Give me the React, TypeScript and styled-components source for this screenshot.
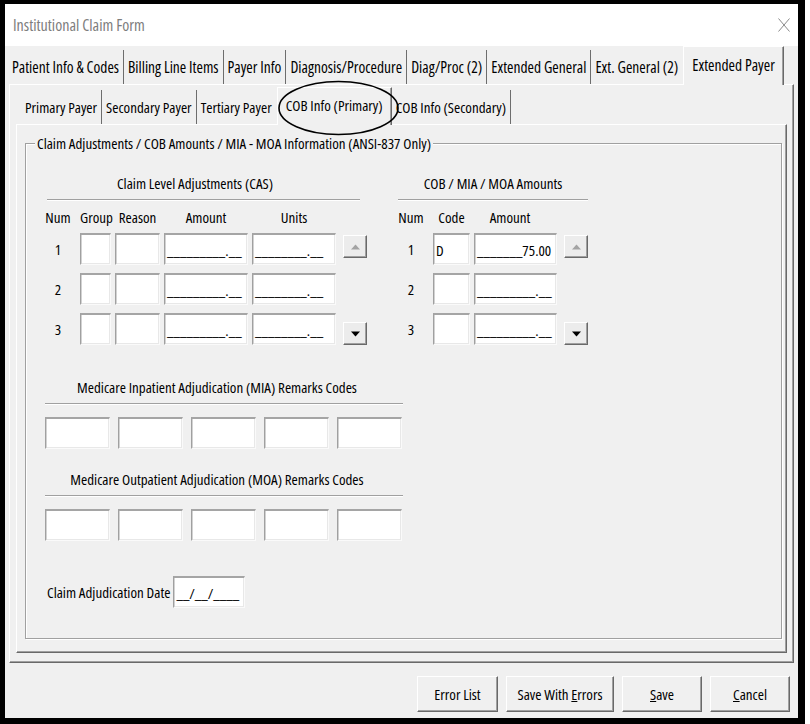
import React from "react";
import styled, { createGlobalStyle, css } from "styled-components";

const GlobalStyle = createGlobalStyle`
  html, body {
    margin: 0;
    padding: 0;
    background: #ffffff;
  }
  body {
    font-family: "Open Sans", "Liberation Sans", sans-serif;
    font-stretch: 75%;
    font-size: 15px;
    color: #000000;
  }
`;

const Frame = styled.div`
  position: relative;
  box-sizing: border-box;
  width: 805px;
  height: 724px;
  overflow: hidden;
  border-style: solid;
  border-color: #000000;
  border-width: 4px 7px 6px 5px;
`;

const Window = styled.div`
  display: flex;
  flex-direction: column;
  height: 100%;
  background: #f0f0f0;
`;

const TitleBar = styled.div`
  flex: none;
  height: 42px;
  display: flex;
  align-items: center;
  justify-content: space-between;
  padding: 0 8px;
  background: #ffffff;
`;

const TitleText = styled.span`
  font-size: 16px;
  color: #7d7d7d;
`;

const TabStrip = styled.div<{ $height: number; $inset: number; $size: number }>`
  position: relative;
  z-index: 1;
  flex: none;
  display: flex;
  align-items: flex-end;
  height: ${(p) => p.$height}px;
  margin-bottom: -1px;
  padding-left: ${(p) => p.$inset}px;
  font-size: ${(p) => p.$size}px;
`;

const Tab = styled.div<{ $active?: boolean; $sep?: boolean; $tall?: number }>`
  box-sizing: border-box;
  display: flex;
  align-items: center;
  height: 34px;
  margin-bottom: 1px;
  padding: 0 4px;
  white-space: nowrap;
  border-right: 1px solid ${(p) => (p.$sep ? "#6d6d6d" : "transparent")};

  ${(p) =>
    p.$active &&
    css`
      height: ${p.$tall}px;
      margin-bottom: 0;
      padding: 0 8px 3px;
      background: #f0f0f0;
      border-left: 1px solid #ffffff;
      border-top: 1px solid #ffffff;
      border-right: 1px solid #696969;
      box-shadow: inset -1px 0 0 #a0a0a0;
    `}
`;

const Page = styled.div<{ $pad: string }>`
  flex: 1;
  display: flex;
  flex-direction: column;
  min-height: 0;
  padding: ${(p) => p.$pad};
  border-style: solid;
  border-width: 1px;
  border-color: #ffffff #696969 #696969 #ffffff;
  box-shadow: inset -1px -1px 0 #a0a0a0;
`;

const OuterPage = styled(Page)`
  margin: 0 4px;
`;

const GroupBox = styled.fieldset`
  flex: 1;
  min-width: 0;
  margin: 0;
  padding: 23px 0 0 14px;
  border: 1px solid #a0a0a0;
  box-shadow: 1px 1px 0 #ffffff, inset 1px 1px 0 #ffffff;
`;

const Legend = styled.legend`
  margin-left: -5px;
  padding: 0 2px;
  line-height: 17px;
  background: #f0f0f0;
`;

const TopRow = styled.div`
  display: flex;
  gap: 26px;
`;

const Section = styled.div`
  display: flex;
  flex-direction: column;
`;

const SectionTitle = styled.div<{ $indent: number; $width: number }>`
  margin-left: ${(p) => p.$indent}px;
  width: ${(p) => p.$width}px;
  line-height: 17px;
  text-align: center;
  white-space: nowrap;
`;

const Rule = styled.div<{ $indent?: number; $width?: number }>`
  margin-top: 7px;
  margin-left: ${(p) => p.$indent ?? 0}px;
  width: ${(p) => (p.$width ? `${p.$width}px` : "auto")};
  border-top: 1px solid #a0a0a0;
  border-bottom: 1px solid #ffffff;
`;

const AdjGrid = styled.div<{ $cols: string }>`
  display: grid;
  grid-template-columns: ${(p) => p.$cols};
  grid-template-rows: 16px repeat(3, 32px);
  column-gap: 4px;
  row-gap: 8px;
  margin-top: 8px;
`;

const HeadCell = styled.div<{ $nudge?: number }>`
  align-self: end;
  padding-right: ${(p) => p.$nudge ?? 0}px;
  line-height: 16px;
  text-align: center;
  white-space: nowrap;
`;

const NumCell = styled.div`
  align-self: center;
  text-align: center;
`;

const Field = styled.div`
  box-sizing: border-box;
  height: 32px;
  display: flex;
  align-items: center;
  padding: 0 2px;
  overflow: hidden;
  white-space: nowrap;
  background: #ffffff;
  border-style: solid;
  border-width: 2px 1px 1px 1px;
  border-color: #a5a5a5 #fafafa #fafafa #a0a0a0;
  box-shadow: inset 1px 0 0 #d2d2d2, inset -1px -1px 0 #e8e8e8;
`;

const SpinButton = styled.div<{ $place: "start" | "end" }>`
  box-sizing: border-box;
  justify-self: end;
  align-self: ${(p) => p.$place};
  width: 24px;
  height: 23px;
  margin-top: ${(p) => (p.$place === "start" ? "2px" : "0")};
  display: flex;
  align-items: center;
  justify-content: center;
  background: #ececec;
  border-style: solid;
  border-width: 1px;
  border-color: #ffffff #696969 #696969 #ffffff;
  box-shadow: inset -1px -1px 0 #a0a0a0;
`;

const Remarks = styled.div<{ $gap: number }>`
  width: 358px;
  margin: ${(p) => p.$gap}px 0 0 5px;
`;

const RemarkTitle = styled.div`
  padding-right: 14px;
  line-height: 17px;
  text-align: center;
  white-space: nowrap;
`;

const RemarkBoxes = styled.div`
  display: grid;
  grid-template-columns: repeat(5, 65px);
  column-gap: 8px;
  margin-top: 12px;
`;

const DateRow = styled.div`
  display: flex;
  align-items: center;
  gap: 3px;
  margin: 35px 0 0 7px;
`;

const DateField = styled(Field)`
  width: 72px;
`;

const ButtonBar = styled.div`
  flex: none;
  box-sizing: border-box;
  height: 55px;
  display: flex;
  justify-content: flex-end;
  align-items: flex-start;
  gap: 8px;
  padding: 13px 8px 0 0;
`;

const Button = styled.button<{ $w: number }>`
  box-sizing: border-box;
  width: ${(p) => p.$w}px;
  height: 36px;
  padding: 0;
  font: inherit;
  font-stretch: 75%;
  white-space: nowrap;
  color: #000000;
  background: #f0f0f0;
  border-style: solid;
  border-width: 1px;
  border-color: #ffffff #696969 #696969 #ffffff;
  box-shadow: inset -1px -1px 0 #a0a0a0;
`;

const Key = styled.span`
  text-decoration: underline;
`;

const Annotation = styled.svg`
  position: absolute;
  left: 273px;
  top: 76px;
  pointer-events: none;
  z-index: 5;
`;

const outerTabs = [
  "Patient Info & Codes",
  "Billing Line Items",
  "Payer Info",
  "Diagnosis/Procedure",
  "Diag/Proc (2)",
  "Extended General",
  "Ext. General (2)",
  "Extended Payer",
];

const innerTabs = [
  "Primary Payer",
  "Secondary Payer",
  "Tertiary Payer",
  "COB Info (Primary)",
  "COB Info (Secondary)",
];

const Tabs = ({
  labels,
  active,
  height,
  inset,
  tall,
  size,
}: {
  labels: string[];
  active: number;
  height: number;
  inset: number;
  tall: number;
  size: number;
}) => (
  <TabStrip $height={height} $inset={inset} $size={size}>
    {labels.map((label, i) => (
      <Tab key={label} $active={i === active} $sep={i + 1 !== active} $tall={tall}>
        {label}
      </Tab>
    ))}
  </TabStrip>
);

const Arrow = ({ up }: { up?: boolean }) => (
  <svg width="9" height="6" viewBox="0 0 9 6">
    {up ? (
      <polygon points="0,5.5 4.5,0.5 9,5.5" fill="#a3a3a3" />
    ) : (
      <polygon points="0,0.5 9,0.5 4.5,5.5" fill="#000000" />
    )}
  </svg>
);

const CloseIcon = () => (
  <svg width="12" height="14" viewBox="0 0 12 14">
    <path d="M0.5 0.5 L11.5 13.5 M11.5 0.5 L0.5 13.5" stroke="#8a8a8a" strokeWidth="1" fill="none" />
  </svg>
);

const AMOUNT = "_________.__";
const UNITS = "________.__";

const App = () => {
  return (
    <>
      <GlobalStyle />
      <Frame>
        <Window>
          <TitleBar>
            <TitleText>Institutional Claim Form</TitleText>
            <CloseIcon />
          </TitleBar>

          <Tabs labels={outerTabs} active={7} height={39} inset={3} tall={39} size={15.5} />
          <OuterPage $pad="0 6px 9px 6px">
            <Tabs labels={innerTabs} active={3} height={40} inset={5} tall={38} size={15} />
            <Page $pad="10px 4px 13px 8px">
              <GroupBox>
                <Legend>Claim Adjustments / COB Amounts / MIA - MOA Information (ANSI-837 Only)</Legend>

                <TopRow>
                  <Section>
                    <SectionTitle $indent={7} $width={296}>
                      Claim Level Adjustments (CAS)
                    </SectionTitle>
                    <Rule $indent={7} $width={313} />
                    <AdjGrid $cols="36px 31px 45px 84px 84px 27px">
                      <HeadCell>Num</HeadCell>
                      <HeadCell $nudge={3}>Group</HeadCell>
                      <HeadCell>Reason</HeadCell>
                      <HeadCell>Amount</HeadCell>
                      <HeadCell>Units</HeadCell>
                      <div />
                      {[1, 2, 3].map((n) => (
                        <React.Fragment key={`cas-${n}`}>
                          <NumCell>{n}</NumCell>
                          <Field />
                          <Field />
                          <Field>{AMOUNT}</Field>
                          <Field>{UNITS}</Field>
                          {n === 1 && (
                            <SpinButton $place="start">
                              <Arrow up />
                            </SpinButton>
                          )}
                          {n === 2 && <div />}
                          {n === 3 && (
                            <SpinButton $place="end">
                              <Arrow />
                            </SpinButton>
                          )}
                        </React.Fragment>
                      ))}
                    </AdjGrid>
                  </Section>

                  <Section>
                    <SectionTitle $indent={5} $width={190}>
                      COB / MIA / MOA Amounts
                    </SectionTitle>
                    <Rule $indent={5} $width={190} />
                    <AdjGrid $cols="36px 37px 83px 27px">
                      <HeadCell>Num</HeadCell>
                      <HeadCell>Code</HeadCell>
                      <HeadCell $nudge={11}>Amount</HeadCell>
                      <div />
                      {[1, 2, 3].map((n) => (
                        <React.Fragment key={`cob-${n}`}>
                          <NumCell>{n}</NumCell>
                          <Field>{n === 1 ? "D" : ""}</Field>
                          <Field>{n === 1 ? "_______75.00" : AMOUNT}</Field>
                          {n === 1 && (
                            <SpinButton $place="start">
                              <Arrow up />
                            </SpinButton>
                          )}
                          {n === 2 && <div />}
                          {n === 3 && (
                            <SpinButton $place="end">
                              <Arrow />
                            </SpinButton>
                          )}
                        </React.Fragment>
                      ))}
                    </AdjGrid>
                  </Section>
                </TopRow>

                <Remarks $gap={34}>
                  <RemarkTitle>Medicare Inpatient Adjudication (MIA) Remarks Codes</RemarkTitle>
                  <Rule />
                  <RemarkBoxes>
                    {[0, 1, 2, 3, 4].map((i) => (
                      <Field key={`mia-${i}`} />
                    ))}
                  </RemarkBoxes>
                </Remarks>

                <Remarks $gap={22}>
                  <RemarkTitle>Medicare Outpatient Adjudication (MOA) Remarks Codes</RemarkTitle>
                  <Rule />
                  <RemarkBoxes>
                    {[0, 1, 2, 3, 4].map((i) => (
                      <Field key={`moa-${i}`} />
                    ))}
                  </RemarkBoxes>
                </Remarks>

                <DateRow>
                  <span>Claim Adjudication Date</span>
                  <DateField>__/__/____</DateField>
                </DateRow>
              </GroupBox>
            </Page>
          </OuterPage>

          <ButtonBar>
            <Button $w={81}>Error List</Button>
            <Button $w={108}>
              Save With <Key>E</Key>rrors
            </Button>
            <Button $w={80}>
              <Key>S</Key>ave
            </Button>
            <Button $w={80}>
              <Key>C</Key>ancel
            </Button>
          </ButtonBar>
        </Window>

        <Annotation width="121" height="56" viewBox="0 0 121 56">
          <ellipse cx="60.5" cy="28" rx="59.5" ry="26.5" fill="none" stroke="#000000" strokeWidth="1.6" />
        </Annotation>
      </Frame>
    </>
  );
};

export default App;
